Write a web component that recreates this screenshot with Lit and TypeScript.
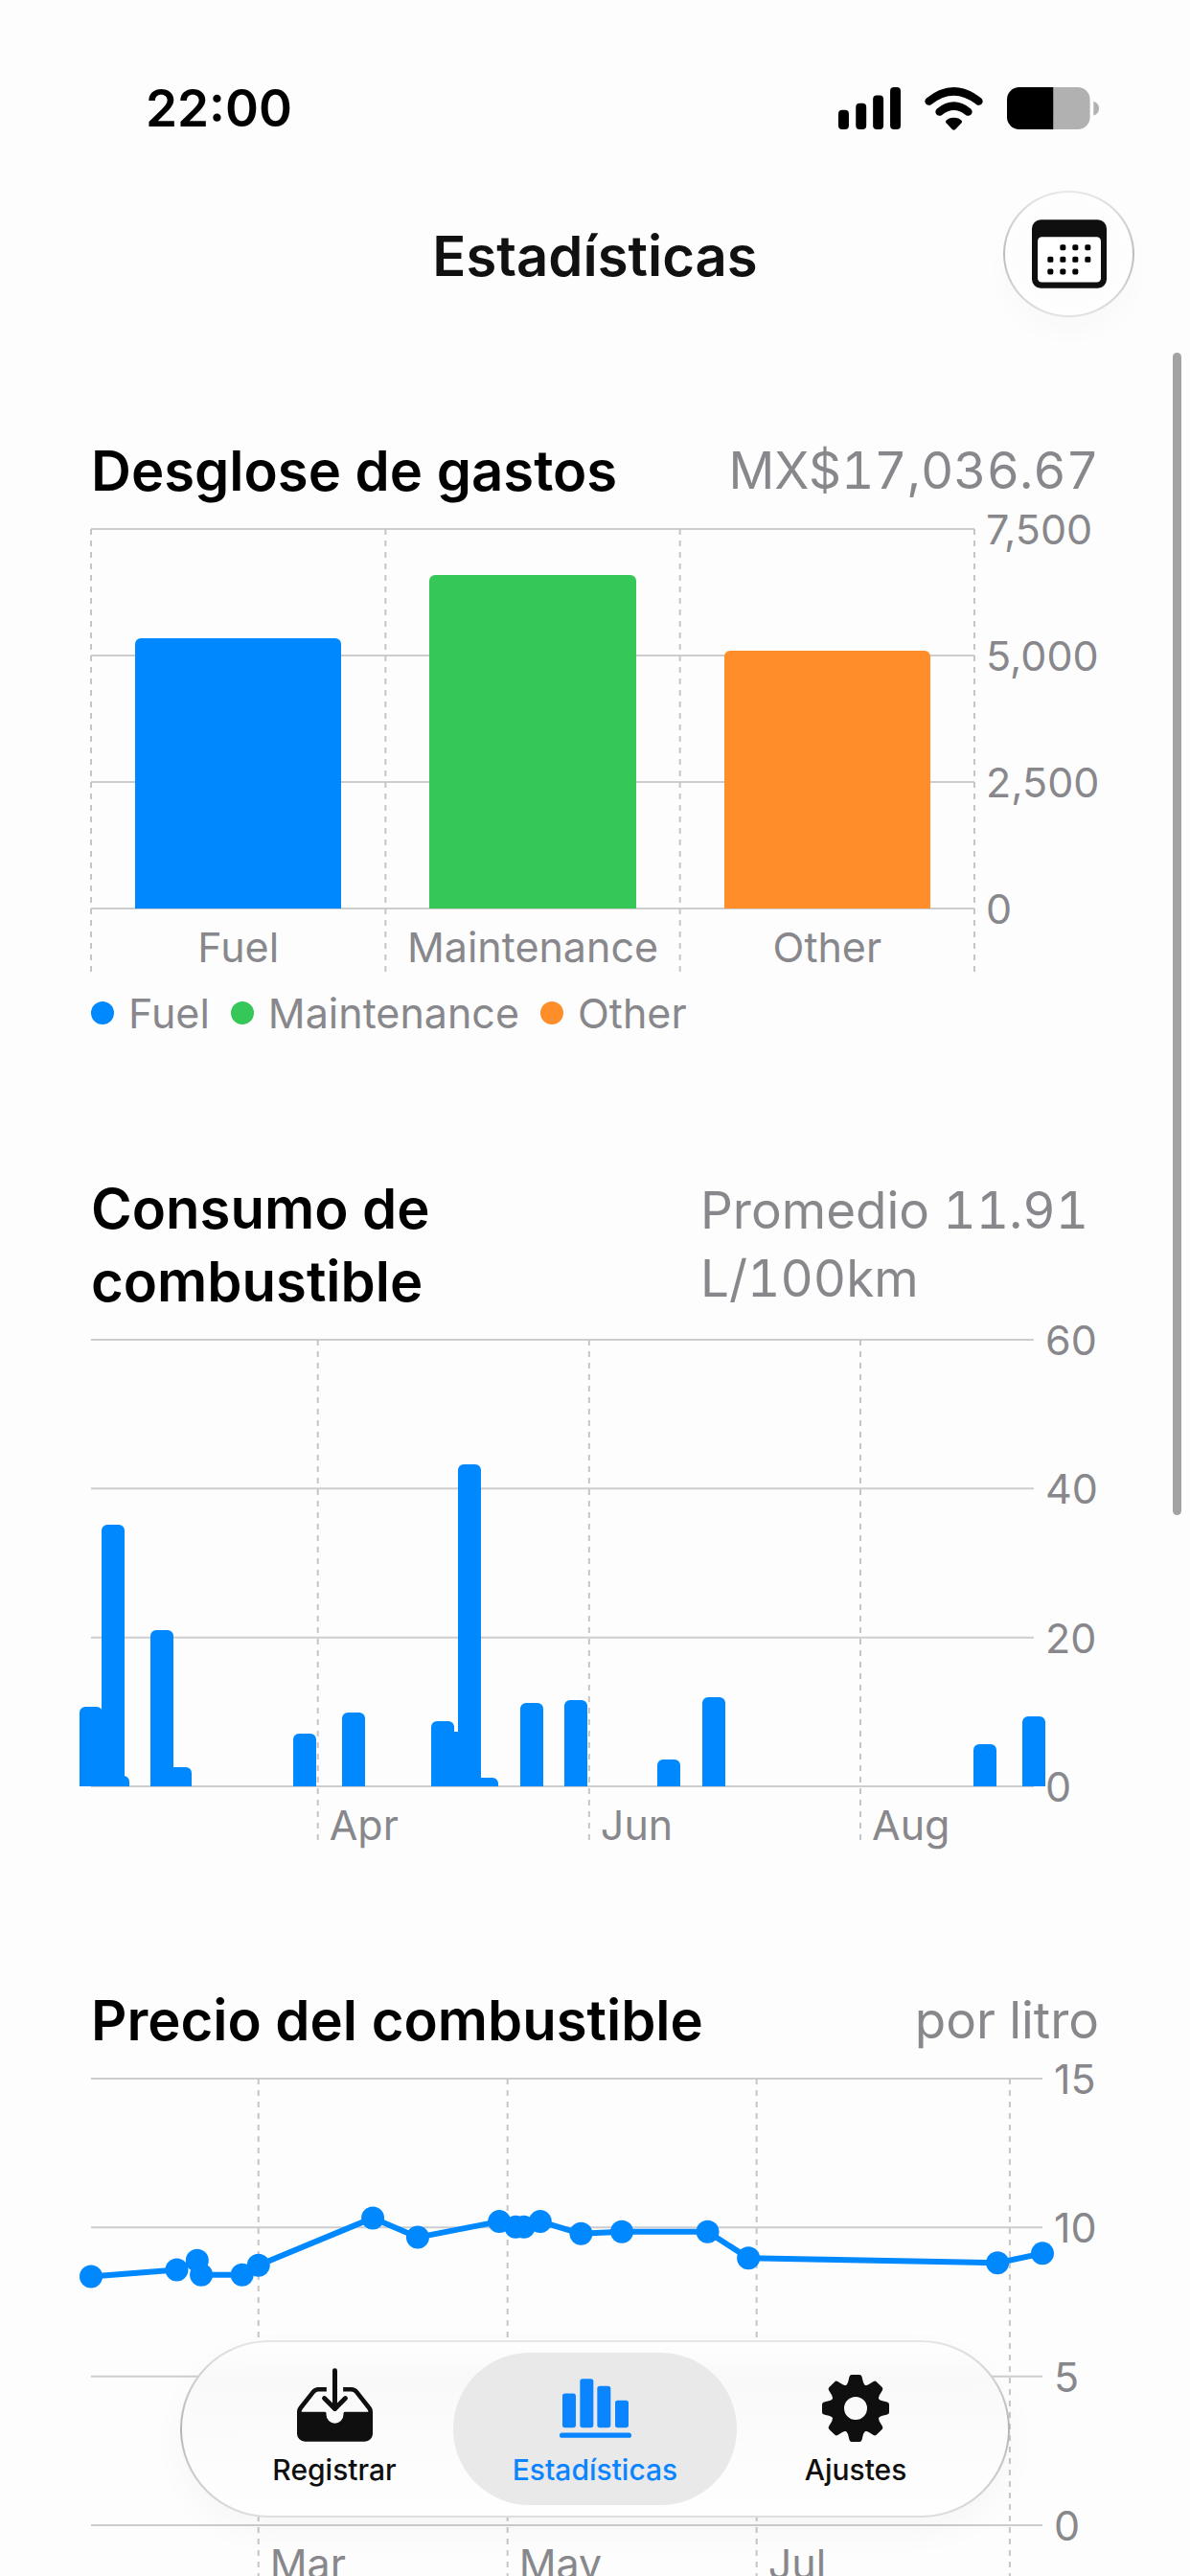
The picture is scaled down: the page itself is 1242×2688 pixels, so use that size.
import { LitElement, css, html, svg, nothing } from 'lit';
import { customElement, property, state } from 'lit/decorators.js';
import { classMap } from 'lit/directives/class-map.js';

interface Category {
  label: string;
  value: number;
  tone: string;
}

// day = days since the first record of the series
interface Sample {
  day: number;
  value: number;
}

interface Tick {
  day: number;
  label: string;
}

const EXPENSES: Category[] = [
  { label: 'Fuel', value: 5350, tone: 'blue' },
  { label: 'Maintenance', value: 6600, tone: 'green' },
  { label: 'Other', value: 5086.67, tone: 'orange' },
];

const CONSUMPTION: Sample[] = [
  { day: 0, value: 10.7 },
  { day: 5, value: 35.1 },
  { day: 6, value: 1.4 },
  { day: 16, value: 21 },
  { day: 20, value: 2.6 },
  { day: 48, value: 7.1 },
  { day: 59, value: 9.9 },
  { day: 79, value: 8.7 },
  { day: 81, value: 7.4 },
  { day: 85, value: 43.3 },
  { day: 89, value: 1.1 },
  { day: 99, value: 11.2 },
  { day: 109, value: 11.6 },
  { day: 130, value: 3.6 },
  { day: 140, value: 12 },
  { day: 201, value: 5.7 },
  { day: 212, value: 9.4 },
];

const PRICES: Sample[] = [
  { day: 0, value: 8.35 },
  { day: 21, value: 8.58 },
  { day: 26, value: 8.89 },
  { day: 27, value: 8.41 },
  { day: 37, value: 8.41 },
  { day: 41, value: 8.73 },
  { day: 69, value: 10.32 },
  { day: 80, value: 9.67 },
  { day: 100, value: 10.2 },
  { day: 104, value: 10.02 },
  { day: 106, value: 10.02 },
  { day: 110, value: 10.2 },
  { day: 120, value: 9.79 },
  { day: 130, value: 9.86 },
  { day: 151, value: 9.86 },
  { day: 161, value: 8.97 },
  { day: 222, value: 8.81 },
  { day: 233, value: 9.13 },
];

const signalIcon = html`
  <svg class="signal" viewBox="0 0 196 132" aria-hidden="true">
    <rect x="0" y="71" width="33" height="61" rx="12" />
    <rect x="55" y="50" width="33" height="82" rx="12" />
    <rect x="109" y="25" width="33" height="107" rx="12" />
    <rect x="163" y="0" width="33" height="132" rx="12" />
  </svg>
`;

const wifiIcon = html`
  <svg class="wifi" viewBox="0 0 182 135" aria-hidden="true">
    <g fill="none" stroke="currentColor" stroke-width="25" stroke-linecap="round">
      <path d="M13 44Q91 -18 169 44" />
      <path d="M46 77Q91 41 136 77" />
    </g>
    <path d="M91 95q16 0 24 9q3 4 0 8L96 132q-5 4-10 0L67 112q-3-4 0-8Q75 95 91 95z" />
  </svg>
`;

const batteryIcon = html`
  <svg class="battery" viewBox="0 0 286 131" aria-hidden="true">
    <path d="M144 0h76a38 38 0 0 1 38 38v55a38 38 0 0 1-38 38h-76z" fill="#b1b1b1" />
    <path d="M144 0H38A38 38 0 0 0 0 38v55a38 38 0 0 0 38 38h106z" />
    <path d="M269 44q17 6 17 22t-17 22z" fill="#b1b1b1" />
  </svg>
`;

const calendarIcon = html`
  <svg class="calendar" viewBox="0 0 234 215" aria-hidden="true">
    <rect width="234" height="215" rx="28" fill="#0f0f0f" />
    <rect x="18" y="54" width="198" height="142" rx="13" fill="#fff" />
    ${[
      [97, 87], [136, 87], [175, 87],
      [58, 125], [97, 125], [136, 125], [175, 125],
      [58, 163], [97, 163], [136, 163],
    ].map(([x, y]) => svg`<rect x=${x - 9} y=${y - 9} width="18" height="18" rx="5" />`)}
  </svg>
`;

const trayIcon = html`
  <svg class="tray" viewBox="0 0 238 230" aria-hidden="true">
    <g fill="none" stroke="currentColor" stroke-width="14">
      <path d="M7 200V137Q7 130 11 125L51 74Q57 66 67 66H93" />
      <path d="M231 200V137Q231 130 227 125L187 74Q181 66 171 66H145" />
    </g>
    <g fill="none" stroke="currentColor" stroke-width="15" stroke-linecap="round" stroke-linejoin="round">
      <path d="M119 7V126" />
      <path d="M86 94L119 127L152 94" />
    </g>
    <path d="M0 137H88Q92 137 92 142V146A27 27 0 0 0 146 146V142Q146 137 150 137H238V205A25 25 0 0 1 213 230H25A25 25 0 0 1 0 205z" />
  </svg>
`;

const barsIcon = html`
  <svg class="bars" viewBox="0 0 225 185" aria-hidden="true">
    <rect x="9" y="46" width="42" height="107" rx="8" />
    <rect x="64" y="0" width="42" height="153" rx="8" />
    <rect x="118" y="23" width="42" height="130" rx="8" />
    <rect x="174" y="68" width="42" height="85" rx="8" />
    <rect x="0" y="169" width="225" height="16" rx="8" />
  </svg>
`;

const gearIcon = html`
  <svg class="gear" viewBox="-35 -35 70 70" aria-hidden="true">
    <circle r="19" fill="none" stroke="currentColor" stroke-width="14" />
    ${[0, 45, 90, 135, 180, 225, 270, 315].map(
      (angle) => svg`<path
        transform="rotate(${angle})"
        d="M-4 -35H4Q6 -35 6.500 -33L8 -27Q9 -24 12 -22H-12Q-9 -24 -8 -27L-6.500 -33Q-6 -35 -4 -35z"
      />`
    )}
  </svg>
`;

/**
 * Chart frame: horizontal grid, value axis on the right, category or month axis below.
 *
 * @element stats-chart
 */
@customElement('stats-chart')
export class StatsChart extends LitElement {
  static override styles = css`
    :host {
      display: block;
      --axis-height: 60px;
      --plot-height: 466px;
    }

    :host([kind='category']) {
      --axis-height: 66px;
      --plot-height: 396px;
    }

    .chart {
      display: flex;
      color: #88888c;
      font-size: 43px;
      line-height: 52px;
    }

    .body {
      flex: 1;
      min-width: 0;
      position: relative;
    }

    .grid {
      position: absolute;
      inset: 0;
      width: 100%;
      height: 100%;
      overflow: visible;
    }

    .marks {
      position: relative;
      display: flex;
      height: var(--plot-height);
    }

    .column {
      flex: 1;
      display: flex;
      align-items: flex-end;
      justify-content: center;
    }

    .bar {
      width: 70%;
      border-radius: 6px 6px 0 0;
    }

    .bar.timed {
      position: absolute;
      bottom: 0;
      width: 24px;
      margin-left: -12px;
    }

    .line {
      width: 100%;
      height: 100%;
      overflow: visible;
      stroke: #0088ff;
      fill: #0088ff;
      stroke-width: 6px;
      stroke-linecap: round;
    }

    .line circle {
      stroke: none;
    }

    .blue {
      background: #0088ff;
    }

    .green {
      background: #36c759;
    }

    .orange {
      background: #ff8d29;
    }

    .labels {
      position: relative;
      display: flex;
      box-sizing: border-box;
      height: var(--axis-height);
      padding-top: 14px;
    }

    .labels .category {
      flex: 1;
      text-align: center;
    }

    .labels .month {
      position: absolute;
      padding-left: 12px;
    }

    .values {
      display: flex;
      flex-direction: column;
      justify-content: space-between;
      height: var(--plot-height);
      padding-left: 12px;
      box-sizing: border-box;
    }

    .values span {
      margin: -26px 0;
    }

    .legend {
      display: flex;
      gap: 22px;
      margin: 23px 0 0;
      padding: 0;
      list-style: none;
      color: #88888c;
      font-size: 43px;
      line-height: 40px;
    }

    .legend li {
      display: flex;
      align-items: center;
      gap: 15px;
    }

    .dot {
      width: 24px;
      height: 24px;
      border-radius: 50%;
    }
  `;

  @property({ reflect: true })
  kind: 'category' | 'bar' | 'line' = 'bar';

  @property({ type: Number })
  step = 1;

  @property({ type: Number })
  axisWidth = 60;

  @property({ attribute: false })
  categories: Category[] = [];

  @property({ attribute: false })
  samples: Sample[] = [];

  @property({ attribute: false })
  ticks: Tick[] = [];

  private get max() {
    return this.step * 3;
  }

  private xOf(day: number) {
    const last = this.samples[this.samples.length - 1];
    return `${(day / last.day) * 100}%`;
  }

  private yOf(value: number) {
    return `${(1 - value / this.max) * 100}%`;
  }

  private renderGrid() {
    const columns =
      this.kind === 'category'
        ? [0, 1, 2, 3].map((i) => `${(i / 3) * 100}%`)
        : this.ticks.map((tick) => this.xOf(tick.day));
    return html`
      <svg class="grid" aria-hidden="true">
        <svg height=${this.kind === 'category' ? 396 : 466} overflow="visible">
          ${[0, 1, 2, 3].map(
            (i) => svg`<line x1="0" x2="100%" y1=${`${(i / 3) * 100}%`} y2=${`${(i / 3) * 100}%`}
              stroke="#cdcdcf" stroke-width="2" />`
          )}
        </svg>
        ${columns.map(
          (x) => svg`<line x1=${x} x2=${x} y1="0" y2="100%"
            stroke="#c6c6c8" stroke-width="2" stroke-dasharray="6 6" />`
        )}
      </svg>
    `;
  }

  private renderMarks() {
    if (this.kind === 'category') {
      return this.categories.map(
        (c) => html`
          <div class="column">
            <div class="bar ${c.tone}" style="height: ${(c.value / this.max) * 100}%"></div>
          </div>
        `
      );
    }
    if (this.kind === 'bar') {
      return this.samples.map(
        (s) => html`
          <div
            class="bar timed blue"
            style="left: ${this.xOf(s.day)}; height: ${(s.value / this.max) * 100}%"
          ></div>
        `
      );
    }
    return html`
      <svg class="line" aria-hidden="true">
        ${this.samples.slice(1).map((s, i) => {
          const from = this.samples[i];
          return svg`<line x1=${this.xOf(from.day)} y1=${this.yOf(from.value)}
            x2=${this.xOf(s.day)} y2=${this.yOf(s.value)} />`;
        })}
        ${this.samples.map((s) => svg`<circle cx=${this.xOf(s.day)} cy=${this.yOf(s.value)} r="12" />`)}
      </svg>
    `;
  }

  override render() {
    return html`
      <div class="chart">
        <div class="body">
          ${this.renderGrid()}
          <div class="marks">${this.renderMarks()}</div>
          <div class="labels">
            ${this.categories.map((c) => html`<span class="category">${c.label}</span>`)}
            ${this.ticks.map(
              (t) => html`<span class="month" style="left: ${this.xOf(t.day)}">${t.label}</span>`
            )}
          </div>
        </div>
        <div class="values" style="width: ${this.axisWidth}px">
          ${[3, 2, 1, 0].map((i) => html`<span>${(i * this.step).toLocaleString('en-US')}</span>`)}
        </div>
      </div>
      ${this.categories.length
        ? html`
            <ul class="legend">
              ${this.categories.map((c) => html`<li><span class="dot ${c.tone}"></span>${c.label}</li>`)}
            </ul>
          `
        : nothing}
    `;
  }
}

@customElement('app-root')
export class AppRoot extends LitElement {
  static override styles = css`
    :host {
      display: flex;
      flex-direction: column;
      height: 100vh;
      overflow: hidden;
      position: relative;
      background: #fdfdfd;
      color: #000;
      font-family: Inter, 'Liberation Sans', sans-serif;
    }

    svg {
      display: block;
      fill: currentColor;
    }

    .status {
      display: flex;
      align-items: center;
      justify-content: space-between;
      padding: 86px 95px 0 152px;
      font-size: 53px;
      font-weight: 600;
      line-height: 54px;
    }

    .status-icons {
      display: flex;
      align-items: center;
      gap: 25px;
    }

    .signal {
      width: 65px;
      height: 44px;
    }

    .wifi {
      width: 61px;
      height: 45px;
    }

    .battery {
      width: 96px;
      height: 44px;
    }

    .nav {
      display: grid;
      grid-template-columns: 1fr auto 1fr;
      align-items: center;
      padding: 59px 58px 0;
    }

    .nav h1 {
      grid-column: 2;
      margin: 0;
      padding-top: 4px;
      color: #111;
      font-size: 58px;
      font-weight: 600;
      line-height: 76px;
    }

    .round {
      justify-self: end;
      display: grid;
      place-items: center;
      width: 137px;
      height: 132px;
      padding: 0;
      border: 2px solid transparent;
      border-radius: 50%;
      background: radial-gradient(#fafafa, #fefefe 70%) padding-box,
        linear-gradient(#e8e8e8, #bcbcbc 50%, #e2e2e2) border-box;
      box-shadow: 0 16px 28px rgba(0, 0, 0, 0.02);
      color: #000;
    }

    .calendar {
      width: 78px;
      height: 72px;
    }

    main {
      flex: 1;
      min-height: 0;
      overflow: hidden;
      display: flex;
      flex-direction: column;
      gap: 146px;
      padding: 122px 95px 0;
    }

    .card-head {
      display: flex;
      align-items: center;
      justify-content: space-between;
      margin-bottom: 23px;
    }

    h2 {
      margin: 0;
      font-size: 58px;
      font-weight: 600;
      line-height: 76px;
    }

    .side {
      margin: 0;
      max-width: 416px;
      color: #88888c;
      font-size: 53px;
      font-variant-numeric: tabular-nums;
      line-height: 71px;
    }

    .scroll-thumb {
      position: absolute;
      top: 368px;
      right: 9px;
      width: 9px;
      height: 1213px;
      border-radius: 5px;
      background: #a3a3a3;
    }

    .tabs {
      position: absolute;
      bottom: 61px;
      left: 50%;
      transform: translateX(-50%);
      display: flex;
      padding: 11px;
      border: 2px solid transparent;
      border-radius: 93px;
      background: linear-gradient(#fefefe, #f9f9f9 20%, #fcfcfc 60%, #fefefe) padding-box,
        linear-gradient(#e6e6e6, #b4b4b4 50%, #dedede) border-box;
      box-shadow: 0 14px 36px rgba(0, 0, 0, 0.03);
    }

    .tab {
      display: flex;
      flex-direction: column;
      align-items: center;
      justify-content: flex-end;
      gap: 14px;
      width: 296px;
      height: 159px;
      padding: 0 0 22px;
      border: 0;
      border-radius: 80px;
      background: none;
      color: #0f0f0f;
      font-family: inherit;
      font-size: 30px;
      font-weight: 500;
      line-height: 30px;
    }

    .tab + .tab {
      margin-left: -24px;
    }

    .tab.selected {
      background: #e9e9ea;
      color: #0a84ff;
    }

    .tray {
      width: 79px;
      height: 77px;
    }

    .bars {
      width: 75px;
      height: 62px;
      padding-bottom: 4px;
    }

    .gear {
      width: 70px;
      height: 70px;
    }
  `;

  @state()
  private tab = 'stats';

  private tabs = [
    { id: 'add', label: 'Registrar', icon: trayIcon },
    { id: 'stats', label: 'Estadísticas', icon: barsIcon },
    { id: 'settings', label: 'Ajustes', icon: gearIcon },
  ];

  override render() {
    return html`
      <div class="status">
        <span>22:00</span>
        <div class="status-icons">${signalIcon} ${wifiIcon} ${batteryIcon}</div>
      </div>

      <header class="nav">
        <h1>Estadísticas</h1>
        <button class="round" aria-label="Calendario">${calendarIcon}</button>
      </header>

      <main>
        <section>
          <div class="card-head">
            <h2>Desglose de gastos</h2>
            <p class="side">MX$17,036.67</p>
          </div>
          <stats-chart kind="category" .step=${2500} .axisWidth=${130} .categories=${EXPENSES}></stats-chart>
        </section>

        <section>
          <div class="card-head">
            <h2>Consumo de combustible</h2>
            <p class="side">Promedio 11.91 L/100km</p>
          </div>
          <stats-chart
            kind="bar"
            .step=${20}
            .axisWidth=${68}
            .samples=${CONSUMPTION}
            .ticks=${[
              { day: 51, label: 'Apr' },
              { day: 112, label: 'Jun' },
              { day: 173, label: 'Aug' },
            ]}
          ></stats-chart>
        </section>

        <section>
          <div class="card-head">
            <h2>Precio del combustible</h2>
            <p class="side">por litro</p>
          </div>
          <stats-chart
            kind="line"
            .step=${5}
            .axisWidth=${59}
            .samples=${PRICES}
            .ticks=${[
              { day: 41, label: 'Mar' },
              { day: 102, label: 'May' },
              { day: 163, label: 'Jul' },
              { day: 225, label: '' },
            ]}
          ></stats-chart>
        </section>
      </main>

      <div class="scroll-thumb"></div>

      <nav class="tabs">
        ${this.tabs.map(
          (t) => html`
            <button
              class=${classMap({ tab: true, selected: t.id === this.tab })}
              @click=${() => (this.tab = t.id)}
            >
              ${t.icon}
              <span>${t.label}</span>
            </button>
          `
        )}
      </nav>
    `;
  }
}

declare global {
  interface HTMLElementTagNameMap {
    'stats-chart': StatsChart;
    'app-root': AppRoot;
  }
}
